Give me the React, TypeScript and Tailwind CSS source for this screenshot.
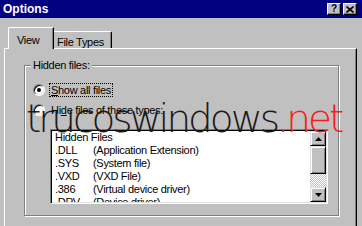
import React from 'react';

const FONT = { fontFamily: '"Liberation Sans", Arial, sans-serif' };

const files: [string, string][] = [
  ['.DLL', '(Application Extension)'],
  ['.SYS', '(System file)'],
  ['.VXD', '(VXD File)'],
  ['.386', '(Virtual device driver)'],
  ['.DRV', '(Device driver)'],
];

function CaptionButton({ children }: { children: React.ReactNode }) {
  return (
    <div className="w-[14px] h-[12px] bg-[#c0c0c0] border border-t-white border-l-white border-b-black border-r-black shadow-[inset_-1px_-1px_0_#808080] flex items-center justify-center text-black">
      {children}
    </div>
  );
}

function ScrollButton({ down }: { down?: boolean }) {
  return (
    <div className="h-[15px] bg-[#c0c0c0] border border-t-[#dfdfdf] border-l-[#dfdfdf] border-b-black border-r-black shadow-[inset_1px_1px_0_#fff,inset_-1px_-1px_0_#808080] flex items-center justify-center">
      <svg width="7" height="4" viewBox="0 0 7 4">
        {down ? <path d="M0 0h7L3.5 4z" fill="#000" /> : <path d="M0 4h7L3.5 0z" fill="#000" />}
      </svg>
    </div>
  );
}

function Radio({ checked }: { checked?: boolean }) {
  return (
    <div className="w-[12px] h-[12px] rounded-full border border-t-[#808080] border-l-[#808080] border-b-white border-r-white shadow-[inset_1px_1px_0_#000,inset_-1px_-1px_0_#dfdfdf] bg-white flex items-center justify-center shrink-0">
      {checked && <div className="w-[4px] h-[4px] rounded-full bg-black" />}
    </div>
  );
}

export default function App() {
  return (
    <div className="relative w-[362px] h-[226px] overflow-hidden bg-[#c0c0c0] text-[11px] text-black tracking-[-0.3px]" style={FONT}>
      {/* Title bar */}
      <div className="h-[18px] bg-[#000080] flex items-center justify-between pl-[3px] pr-[5px]">
        <span className="text-white font-bold text-[12px] tracking-[0px]">Options</span>
        <div className="flex gap-[2px]">
          <CaptionButton>
            <span className="font-bold text-[10px] leading-none">?</span>
          </CaptionButton>
          <CaptionButton>
            <svg width="8" height="7" viewBox="0 0 8 7">
              <path d="M0.5 0.5l7 6M7.5 0.5l-7 6" stroke="#000" strokeWidth="1.6" />
            </svg>
          </CaptionButton>
        </div>
      </div>

      <div className="pl-[4px] pr-[5px] pt-[9px]">
        {/* Tabs */}
        <div className="flex items-end pl-[4px]">
          <div className="relative z-10 -mb-px w-[46px] h-[22px] -mr-[1px] bg-[#c0c0c0] border-l border-t border-white rounded-tl-[2px] border-r border-r-black shadow-[inset_-1px_0_0_#808080] pl-[8px] pt-[4px]">
            View
          </div>
          <div className="w-[59px] h-[17px] border-t border-white border-r border-r-black shadow-[inset_-1px_0_0_#808080] rounded-tr-[2px] pl-[4px] pt-[2px]">
            File Types
          </div>
        </div>

        {/* Panel */}
        <div className="h-[180px] border-t border-l border-white border-r border-r-black shadow-[inset_-1px_0_0_#808080] pt-[10px] pl-[19px]">
          <fieldset className="w-[315px] h-[157px] border border-[#808080] shadow-[inset_1px_1px_0_#fff,1px_1px_0_#fff]">
            <legend className="ml-[6px] px-[2px] leading-[13px] bg-[#c0c0c0]">Hidden files:</legend>
            <div className="pl-[8px]">
              <div className="mt-[11px] h-[14px] flex items-center gap-[4px]">
                <Radio checked />
                <span className="border border-dotted border-black px-[1px] leading-[12px]">
                  <span className="underline">S</span>how all files
                </span>
              </div>
              <div className="mt-[6px] h-[14px] flex items-center gap-[5px]">
                <Radio />
                <span className="leading-[12px] pl-[1px]">
                  Hi<span className="underline">d</span>e files of these types:
                </span>
              </div>
            </div>

            {/* List box */}
            <div className="ml-[25px] mt-[12px] w-[278px] h-[75px] border border-t-[#808080] border-l-[#808080] border-b-white border-r-white shadow-[inset_1px_1px_0_#000,inset_-1px_-1px_0_#dfdfdf] p-[1px] flex">
              <div className="flex-1 bg-white overflow-hidden pl-[3px] leading-[13px]">
                <div>Hidden Files</div>
                {files.map(([ext, desc]) => (
                  <div key={ext} className="flex">
                    <span className="w-[38px] shrink-0">{ext}</span>
                    <span className="whitespace-nowrap">{desc}</span>
                  </div>
                ))}
              </div>
              <div className="w-[16px] flex flex-col">
                <ScrollButton />
                <div className="h-[28px] bg-[#c0c0c0] border border-t-[#dfdfdf] border-l-[#dfdfdf] border-b-black border-r-black shadow-[inset_1px_1px_0_#fff,inset_-1px_-1px_0_#808080]" />
                <div className="flex-1 bg-[repeating-conic-gradient(#c0c0c0_0%_25%,#fff_0%_50%)] bg-[length:2px_2px]" />
                <ScrollButton down />
              </div>
            </div>
          </fieldset>
        </div>
      </div>

      {/* Watermark */}
      <div
        className="absolute left-[26px] top-[94px] text-[39px] leading-[50px] tracking-[-3px] font-extralight whitespace-nowrap pointer-events-none"
        style={{ fontFamily: '"DejaVu Sans", sans-serif' }}
      >
        <span className="text-[#1a1a1a]">trucoswindows</span>
        <span className="text-[#ff1a1a]">.net</span>
      </div>
    </div>
  );
}
